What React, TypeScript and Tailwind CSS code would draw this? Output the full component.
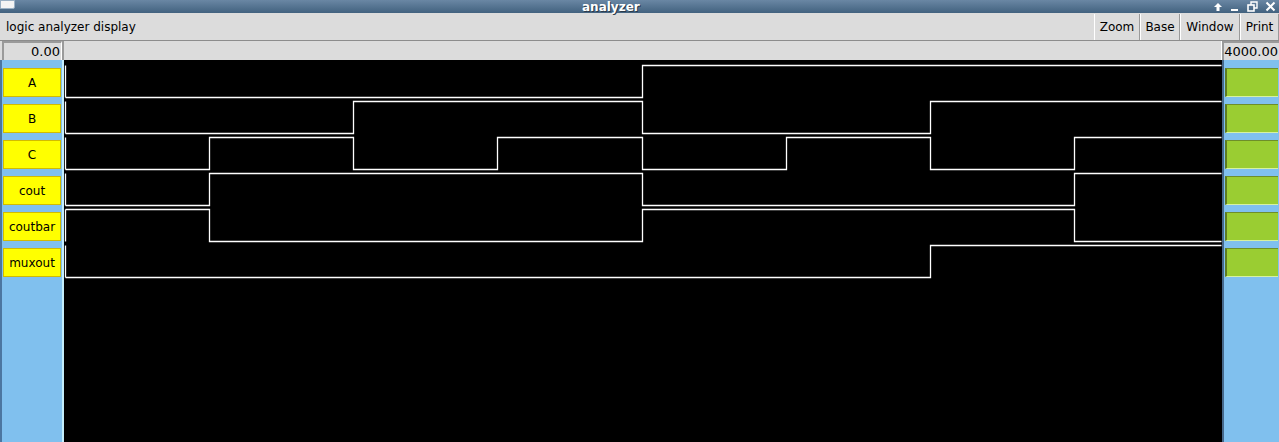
import React from "react";

// signal levels per 500 time units, 1 = high, 0 = low
const signals: { name: string; bits: number[] }[] = [
  { name: "A", bits: [0, 0, 0, 0, 1, 1, 1, 1] },
  { name: "B", bits: [0, 0, 1, 1, 0, 0, 1, 1] },
  { name: "C", bits: [0, 1, 0, 1, 0, 1, 0, 1] },
  { name: "cout", bits: [0, 1, 1, 1, 0, 0, 0, 1] },
  { name: "coutbar", bits: [1, 0, 0, 0, 1, 1, 1, 0] },
  { name: "muxout", bits: [0, 0, 0, 0, 0, 0, 1, 1] },
];

const xAt = (t: number) => Math.floor(1 + t * 0.2885) + 0.5;
const END_X = 1157.5;

function wavePath(bits: number[], row: number) {
  const hi = 5.5 + row * 36;
  const lo = 37.5 + row * 36;
  let d = `M${xAt(0)},${hi} V${lo} M${xAt(0)},${bits[0] ? hi : lo}`;
  for (let i = 1; i < bits.length; i++) {
    if (bits[i] !== bits[i - 1]) {
      const x = xAt(i * 500);
      d += ` H${x} V${bits[i] ? hi : lo}`;
    }
  }
  d += ` H${END_X}`;
  return d;
}

const TitleIcons = () => (
  <div className="flex items-center gap-[7px] pr-[3px]">
    <svg width="10" height="10" viewBox="0 0 10 10">
      <path d="M5 1 L9 5 H6.5 V9 H3.5 V5 H1 Z" fill="white" />
    </svg>
    <svg width="10" height="10" viewBox="0 0 10 10">
      <rect x="1" y="7" width="7" height="2" fill="white" />
    </svg>
    <svg width="11" height="11" viewBox="0 0 11 11">
      <rect x="1" y="4" width="6" height="6" fill="none" stroke="white" strokeWidth="1.6" />
      <path d="M4 4 V1 H10 V7 H7" fill="none" stroke="white" strokeWidth="1.4" />
    </svg>
    <svg width="11" height="11" viewBox="0 0 11 11">
      <path d="M1.5 1.5 L9.5 9.5 M9.5 1.5 L1.5 9.5" stroke="white" strokeWidth="2" />
    </svg>
  </div>
);

const ToolButton = ({ label, width }: { label: string; width: string }) => (
  <div
    className={`flex h-full items-center justify-center border-l border-l-white border-r border-r-[#9a9a9a] ${width}`}
  >
    {label}
  </div>
);

export default function App() {
  return (
    <div
      className="flex h-[442px] w-[1279px] flex-col overflow-hidden bg-black text-[12px] text-black"
      style={{ fontFamily: '"DejaVu Sans", Verdana, sans-serif' }}
    >
      {/* title bar */}
      <div className="relative flex h-[13px] items-center justify-between bg-gradient-to-b from-[#6a87a4] to-[#42627f]">
        <div className="h-[9px] w-[15px] self-start rounded-br-[2px] border border-[#9ab0c4] bg-[#f4f4f4]" />
        <div className="absolute left-[582px] top-[-2px] text-[12px] font-bold text-white [text-shadow:1px_1px_0_#2a3a4a]">
          analyzer
        </div>
        <TitleIcons />
      </div>

      {/* toolbar */}
      <div className="flex h-[27px] items-center justify-between bg-[#dcdcdc]">
        <span className="pl-[6px]">logic analyzer display</span>
        <div className="flex h-full items-stretch pt-[1px]">
          <ToolButton label="Zoom" width="w-[46px]" />
          <ToolButton label="Base" width="w-[40px]" />
          <ToolButton label="Window" width="w-[60px]" />
          <ToolButton label="Print" width="w-[39px]" />
        </div>
      </div>

      {/* time header */}
      <div className="flex h-[20px] border-t border-t-[#8c8c8c] bg-[#dcdcdc] text-[13px]">
        <div className="ml-[2px] flex w-[60px] items-center justify-end border-t-2 border-l-2 border-[#9a9a9a] border-r border-r-white pr-[1px]">
          0.00
        </div>
        <div className="flex-1 border-l-2 border-l-[#9a9a9a] border-r border-r-white" />
        <div className="flex w-[57px] items-center justify-end border-t-2 border-l-2 border-[#9a9a9a] pr-[1px]">
          4000.00
        </div>
      </div>

      {/* body */}
      <div className="flex flex-1">
        <div className="flex w-[64px] flex-col gap-[7px] border-l-2 border-l-[#4c76a0] border-r-2 border-r-[#c4eefc] bg-[#80c0ee] pt-[8px] pl-[1px] pr-[1px]">
          {signals.map((s) => (
            <div
              key={s.name}
              className="flex h-[29px] items-center justify-center border border-[#d2bb00] bg-[#ffff00]"
            >
              {s.name}
            </div>
          ))}
        </div>

        <div className="w-[1158px] bg-black">
          <svg width="1158" height="382" viewBox="0 0 1158 382">
            {signals.map((s, i) => (
              <path
                key={s.name}
                d={wavePath(s.bits, i)}
                fill="none"
                stroke="white"
                strokeWidth="1.3"
              />
            ))}
          </svg>
        </div>

        <div className="flex w-[57px] flex-col gap-[7px] border-l-2 border-l-[#46688a] bg-[#80c0ee] pt-[8px] pl-[1px] pr-[1px]">
          {signals.map((s) => (
            <div
              key={s.name}
              className="h-[29px] border-l-2 border-t border-l-[#5e7a22] border-t-[#6e8e2a] border-b border-b-[#d6f2a0] bg-[#9acd32]"
            />
          ))}
        </div>
      </div>
    </div>
  );
}
